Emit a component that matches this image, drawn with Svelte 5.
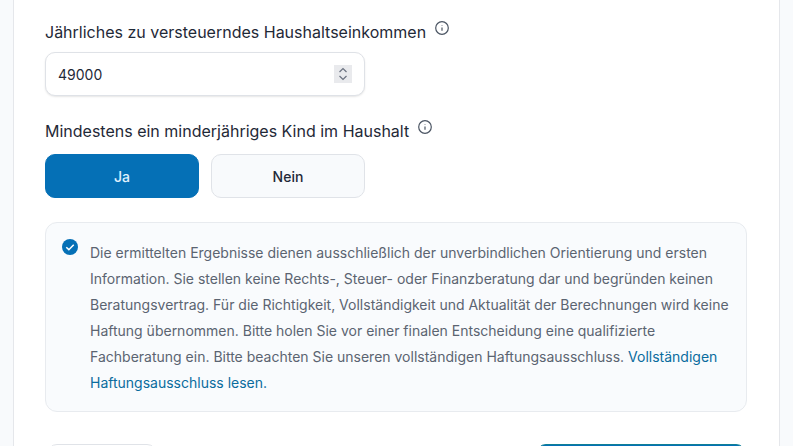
<script lang="ts">
  let income = $state("49000");
  let hasChild = $state(true);
  let accepted = $state(true);
</script>

<main class="page">
  <section class="card">
    <div class="field">
      <div class="label">
        <span>Jährliches zu versteuerndes Haushaltseinkommen</span>
        <svg class="info" viewBox="0 0 16 16" aria-hidden="true">
          <circle cx="8" cy="8" r="6.3" />
          <path d="M8 7.4v3.4M8 5v.6" />
        </svg>
      </div>
      <div class="input">
        <span>{income}</span>
        <span class="spinner">
          <svg viewBox="0 0 18 18" aria-hidden="true">
            <path d="M5.5 7 9 3.5 12.5 7M5.5 11 9 14.5 12.5 11" />
          </svg>
        </span>
      </div>
    </div>

    <div class="field second">
      <div class="label">
        <span>Mindestens ein minderjähriges Kind im Haushalt</span>
        <svg class="info" viewBox="0 0 16 16" aria-hidden="true">
          <circle cx="8" cy="8" r="6.3" />
          <path d="M8 7.4v3.4M8 5v.6" />
        </svg>
      </div>
      <div class="choices">
        <button class:active={hasChild} onclick={() => (hasChild = true)}>Ja</button>
        <button class:active={!hasChild} onclick={() => (hasChild = false)}>Nein</button>
      </div>
    </div>

    <div class="notice">
      <button class="check" class:off={!accepted} onclick={() => (accepted = !accepted)} aria-label="Bestätigen">
        <svg viewBox="0 0 18 18" aria-hidden="true">
          <circle cx="9" cy="9" r="9" />
          <path d="M4.8 9.3 7.7 12 13.2 6.4" />
        </svg>
      </button>
      <p>
        Die ermittelten Ergebnisse dienen ausschließlich der unverbindlichen Orientierung und ersten
        Information. Sie stellen keine Rechts-, Steuer- oder Finanzberatung dar und begründen keinen
        Beratungsvertrag. Für die Richtigkeit, Vollständigkeit und Aktualität der Berechnungen wird keine
        Haftung übernommen. Bitte holen Sie vor einer finalen Entscheidung eine qualifizierte
        Fachberatung ein. Bitte beachten Sie unseren vollständigen Haftungsausschluss.
        <a href="#top">Vollständigen Haftungsausschluss lesen.</a>
      </p>
    </div>

    <div class="actions">
      <button class="back">Zurück</button>
      <button class="next">Weiter</button>
    </div>
  </section>
</main>

<style>
  :global(body) {
    background: #f8fafc;
    font-family: Inter, "Liberation Sans", sans-serif;
    color: #1f2937;
  }

  .page {
    height: 446px;
    overflow: hidden;
    padding: 0 13px;
    box-sizing: border-box;
  }

  .card {
    background: #fff;
    border: 1px solid #e5e7eb;
    border-top: 0;
    padding: 20px 31px 32px;
  }

  .field.second {
    margin-top: 23px;
  }

  .label {
    display: flex;
    align-items: flex-start;
    gap: 8px;
    font-size: 16px;
    line-height: 24px;
    color: #1f2937;
  }

  .info {
    width: 16px;
    height: 16px;
    fill: none;
    stroke: #4b5563;
    stroke-width: 1.2;
  }

  .input {
    margin-top: 8px;
    width: 320px;
    height: 44px;
    box-sizing: border-box;
    display: flex;
    align-items: center;
    justify-content: space-between;
    padding: 0 12px;
    background: #fff;
    border: 1px solid #dfe2e7;
    border-radius: 10px;
    box-shadow: 0 1px 2px rgba(0, 0, 0, 0.1);
    font-size: 14px;
    color: #1f2937;
  }

  .spinner {
    width: 18px;
    height: 18px;
    background: #e9eaed;
    display: flex;
  }

  .spinner svg {
    width: 18px;
    height: 18px;
    fill: none;
    stroke: #6b7280;
    stroke-width: 1.2;
  }

  .choices {
    margin-top: 11px;
    display: grid;
    grid-template-columns: 154px 154px;
    gap: 12px;
  }

  .choices button {
    height: 44px;
    border: 1px solid #e0e3e8;
    border-radius: 10px;
    background: #f8fafc;
    color: #1f2937;
    font: 500 14px Inter, "Liberation Sans", sans-serif;
  }

  .choices button.active {
    background: #0570b6;
    border-color: #0570b6;
    color: #e0f2fe;
  }

  .notice {
    margin-top: 24px;
    width: 702px;
    height: 190px;
    box-sizing: border-box;
    display: flex;
    align-items: flex-start;
    gap: 12px;
    padding: 16px;
    background: #f9fbfd;
    border: 1px solid #e8ebef;
    border-radius: 12px;
  }

  .check {
    flex: none;
    width: 16px;
    height: 16px;
    padding: 0;
    border: 0;
    background: none;
  }

  .check svg {
    display: block;
    width: 16px;
    height: 16px;
  }

  .check circle {
    fill: #0570b6;
  }

  .check path {
    fill: none;
    stroke: #fff;
    stroke-width: 1.7;
  }

  .check.off circle {
    fill: #d1d5db;
  }

  .notice p {
    margin: 0;
    padding-top: 1px;
    font-size: 14px;
    line-height: 26px;
    color: #5b6471;
  }

  .notice a {
    color: #0a6c9e;
    text-decoration: none;
  }

  .actions {
    margin-top: 32px;
    display: flex;
    justify-content: space-between;
    padding: 0 2px;
  }

  .actions button {
    height: 44px;
    border-radius: 10px;
    font: 500 14px Inter, "Liberation Sans", sans-serif;
  }

  .back {
    width: 110px;
    background: #fff;
    border: 1px solid #e0e3e8;
    color: #1f2937;
  }

  .next {
    width: 210px;
    background: #0570b6;
    border: 1px solid #0f7f96;
    color: #fff;
  }
</style>
